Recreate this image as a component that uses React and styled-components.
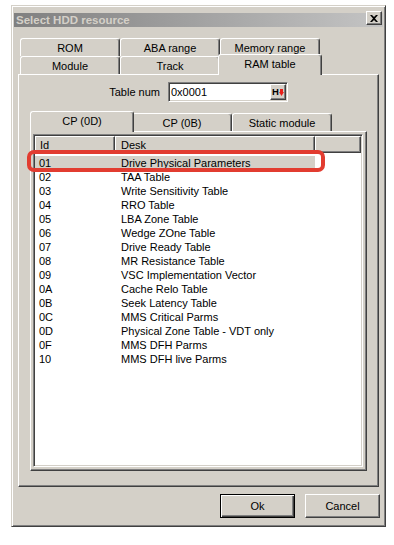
import React from "react";
import styled, { createGlobalStyle } from "styled-components";

const GlobalStyle = createGlobalStyle`
  body {
    margin: 0;
    background: #ffffff;
    font-family: "Liberation Sans", Arial, sans-serif;
  }
`;

const FACE = "#d4d0c8";

const Window = styled.div`
  width: 375px;
  box-sizing: border-box;
  margin: 5px 0 0 11px;
  background: ${FACE};
  border: 1px solid;
  border-color: ${FACE} #404040 #404040 ${FACE};
  box-shadow: inset 1px 1px #fff, inset -1px -1px #808080;
  padding: 7px 2px 8px 2px;
  font-size: 11px;
  color: #000;
`;

const TitleBar = styled.div`
  height: 14px;
  display: flex;
  align-items: center;
  justify-content: space-between;
  padding-left: 2px;
  background: linear-gradient(to right, #808080, #c4c4c4);
  color: ${FACE};
  font-weight: bold;
  font-size: 11.5px;
`;

const CloseButton = styled.div`
  width: 16px;
  height: 14px;
  box-sizing: border-box;
  align-self: flex-start;
  margin: -2px 1px 0 0;
  background: ${FACE};
  border: 1px solid;
  border-color: #fff #404040 #404040 #fff;
  box-shadow: inset -1px -1px #808080;
  display: flex;
  align-items: center;
  justify-content: center;
`;

const Content = styled.div`
  padding: 0 4px;
`;

const TabStrip = styled.div`
  display: flex;
  flex-direction: column;
  padding-left: 2px;
  margin-top: ${(p) => p.$top}px;
`;

const TabRow = styled.div`
  display: flex;
  height: 18px;
`;

const Tab = styled.div`
  width: ${(p) => (p.$active ? 104 : 100)}px;
  height: ${(p) => (p.$active ? 21 : 18)}px;
  margin: ${(p) => (p.$active ? "-2px -2px -1px" : "0")};
  padding-bottom: ${(p) => (p.$active ? 2 : 0)}px;
  box-sizing: border-box;
  position: relative;
  z-index: ${(p) => (p.$active ? 2 : 1)};
  background: ${FACE};
  border-top: 1px solid #fff;
  border-left: 1px solid #fff;
  border-right: 1px solid #404040;
  box-shadow: inset -1px 0 #808080;
  border-radius: 3px 3px 0 0;
  display: flex;
  align-items: center;
  justify-content: center;
  white-space: nowrap;
`;

const Panel = styled.div`
  height: ${(p) => p.$height || "auto"};
  flex: ${(p) => (p.$grow ? 1 : "none")};
  box-sizing: border-box;
  position: relative;
  display: flex;
  flex-direction: column;
  border-top: 1px solid #fff;
  border-left: 1px solid #fff;
  border-right: 1px solid #404040;
  border-bottom: 1px solid #404040;
  box-shadow: inset -1px -1px #808080;
  padding: ${(p) => p.$pad};
`;

const FieldRow = styled.div`
  display: flex;
  align-items: center;
  gap: 8px;
  margin-top: 7px;
  padding-left: 59px;
`;

const Label = styled.span`
  width: 71px;
  text-align: right;
`;

const Input = styled.div`
  width: 120px;
  height: 20px;
  box-sizing: border-box;
  display: flex;
  align-items: center;
  justify-content: space-between;
  background: #fff;
  border: 1px solid;
  border-color: #808080 #fff #fff #808080;
  box-shadow: inset 1px 1px #404040, inset -1px -1px ${FACE};
  padding: 1px 1px 1px 2px;
`;

const SpinButton = styled.div`
  width: 16px;
  height: 16px;
  box-sizing: border-box;
  background: ${FACE};
  border: 1px solid;
  border-color: #fff #404040 #404040 #fff;
  box-shadow: inset -1px -1px #808080;
  display: flex;
  align-items: center;
  justify-content: center;
  font-weight: bold;
  font-size: 9.5px;
  line-height: 1;
`;

const ListView = styled.div`
  flex: 1;
  background: #fff;
  border: 1px solid;
  border-color: #808080 #fff #fff #808080;
  box-shadow: inset 1px 1px #404040, inset -1px -1px ${FACE};
  padding: 1px;
`;

const Header = styled.div`
  display: flex;
  height: 17px;
`;

const HeaderCell = styled.div`
  width: ${(p) => (p.$w ? `${p.$w}px` : "auto")};
  flex: ${(p) => (p.$w ? "none" : 1)};
  box-sizing: border-box;
  background: ${FACE};
  border-top: 1px solid #fff;
  border-left: 1px solid #fff;
  border-right: 1px solid #404040;
  border-bottom: 1px solid #404040;
  box-shadow: inset -1px -1px #808080;
  padding-left: ${(p) => p.$pad || 4}px;
  display: flex;
  align-items: center;
`;

const Rows = styled.div`
  padding-top: 3px;
`;

const Row = styled.div`
  display: flex;
  width: 280px;
  height: 14px;
  align-items: center;
  background: ${(p) => (p.$selected ? FACE : "transparent")};
`;

const Cell = styled.div`
  width: ${(p) => p.$w}px;
  padding-left: ${(p) => p.$pad}px;
  box-sizing: border-box;
  white-space: nowrap;
`;

const Highlight = styled.div`
  position: absolute;
  left: -4px;
  top: 18px;
  width: 298px;
  height: 22px;
  box-sizing: border-box;
  border: 4px solid #e23c30;
  border-radius: 7px;
  pointer-events: none;
`;

const Footer = styled.div`
  display: flex;
  justify-content: flex-end;
  gap: 10px;
  margin: 7px -1px 0 0;
`;

const Button = styled.div`
  width: 75px;
  height: 24px;
  box-sizing: border-box;
  display: flex;
  align-items: center;
  justify-content: center;
  background: ${FACE};
  border: 1px solid;
  border-color: ${(p) => (p.$default ? "#000" : "#fff #404040 #404040 #fff")};
  box-shadow: ${(p) =>
    p.$default
      ? "inset 1px 1px #fff, inset -1px -1px #404040, inset -2px -2px #808080"
      : "inset -1px -1px #808080"};
`;

const rows = [
  ["01", "Drive Physical Parameters"],
  ["02", "TAA Table"],
  ["03", "Write Sensitivity Table"],
  ["04", "RRO Table"],
  ["05", "LBA Zone Table"],
  ["06", "Wedge ZOne Table"],
  ["07", "Drive Ready Table"],
  ["08", "MR Resistance Table"],
  ["09", "VSC Implementation Vector"],
  ["0A", "Cache Relo Table"],
  ["0B", "Seek Latency Table"],
  ["0C", "MMS Critical Parms"],
  ["0D", "Physical Zone Table - VDT only"],
  ["0F", "MMS DFH Parms"],
  ["10", "MMS DFH live Parms"],
];

const App = () => {
  return (
    <>
      <GlobalStyle />
      <Window>
        <TitleBar>
          <span>Select HDD resource</span>
          <CloseButton>
            <svg width="8" height="7" viewBox="0 0 8 7">
              <path d="M0 0h2l2 2 2-2h2L5 3.5 8 7H6L4 5 2 7H0l3-3.5z" fill="#000" />
            </svg>
          </CloseButton>
        </TitleBar>
        <Content>
          <TabStrip $top={11}>
            <TabRow>
              <Tab>ROM</Tab>
              <Tab>ABA range</Tab>
              <Tab>Memory range</Tab>
            </TabRow>
            <TabRow>
              <Tab>Module</Tab>
              <Tab>Track</Tab>
              <Tab $active>RAM table</Tab>
            </TabRow>
          </TabStrip>
          <Panel $height="413px" $pad="0 11px 15px 11px">
            <FieldRow>
              <Label>Table num</Label>
              <Input>
                <span>0x0001</span>
                <SpinButton>
                  H
                  <svg width="5" height="7" viewBox="0 0 5 7">
                    <path d="M1 0h3v3h1L2.5 7 0 3h1z" fill="#e8201a" />
                  </svg>
                </SpinButton>
              </Input>
            </FieldRow>
            <TabStrip $top={11}>
              <TabRow>
                <Tab $active>CP (0D)</Tab>
                <Tab>CP (0B)</Tab>
                <Tab>Static module</Tab>
              </TabRow>
            </TabStrip>
            <Panel $grow $pad="2px 3px 3px 2px">
              <ListView>
                <Header>
                  <HeaderCell $w={80}>Id</HeaderCell>
                  <HeaderCell $w={200} $pad={5}>Desk</HeaderCell>
                  <HeaderCell />
                </Header>
                <Rows>
                  {rows.map(([id, desk], i) => (
                    <Row key={id} $selected={i === 0}>
                      <Cell $w={80} $pad={4}>{id}</Cell>
                      <Cell $w={200} $pad={6}>{desk}</Cell>
                    </Row>
                  ))}
                </Rows>
              </ListView>
              <Highlight />
            </Panel>
          </Panel>
          <Footer>
            <Button $default>Ok</Button>
            <Button>Cancel</Button>
          </Footer>
        </Content>
      </Window>
    </>
  );
};

export default App;
